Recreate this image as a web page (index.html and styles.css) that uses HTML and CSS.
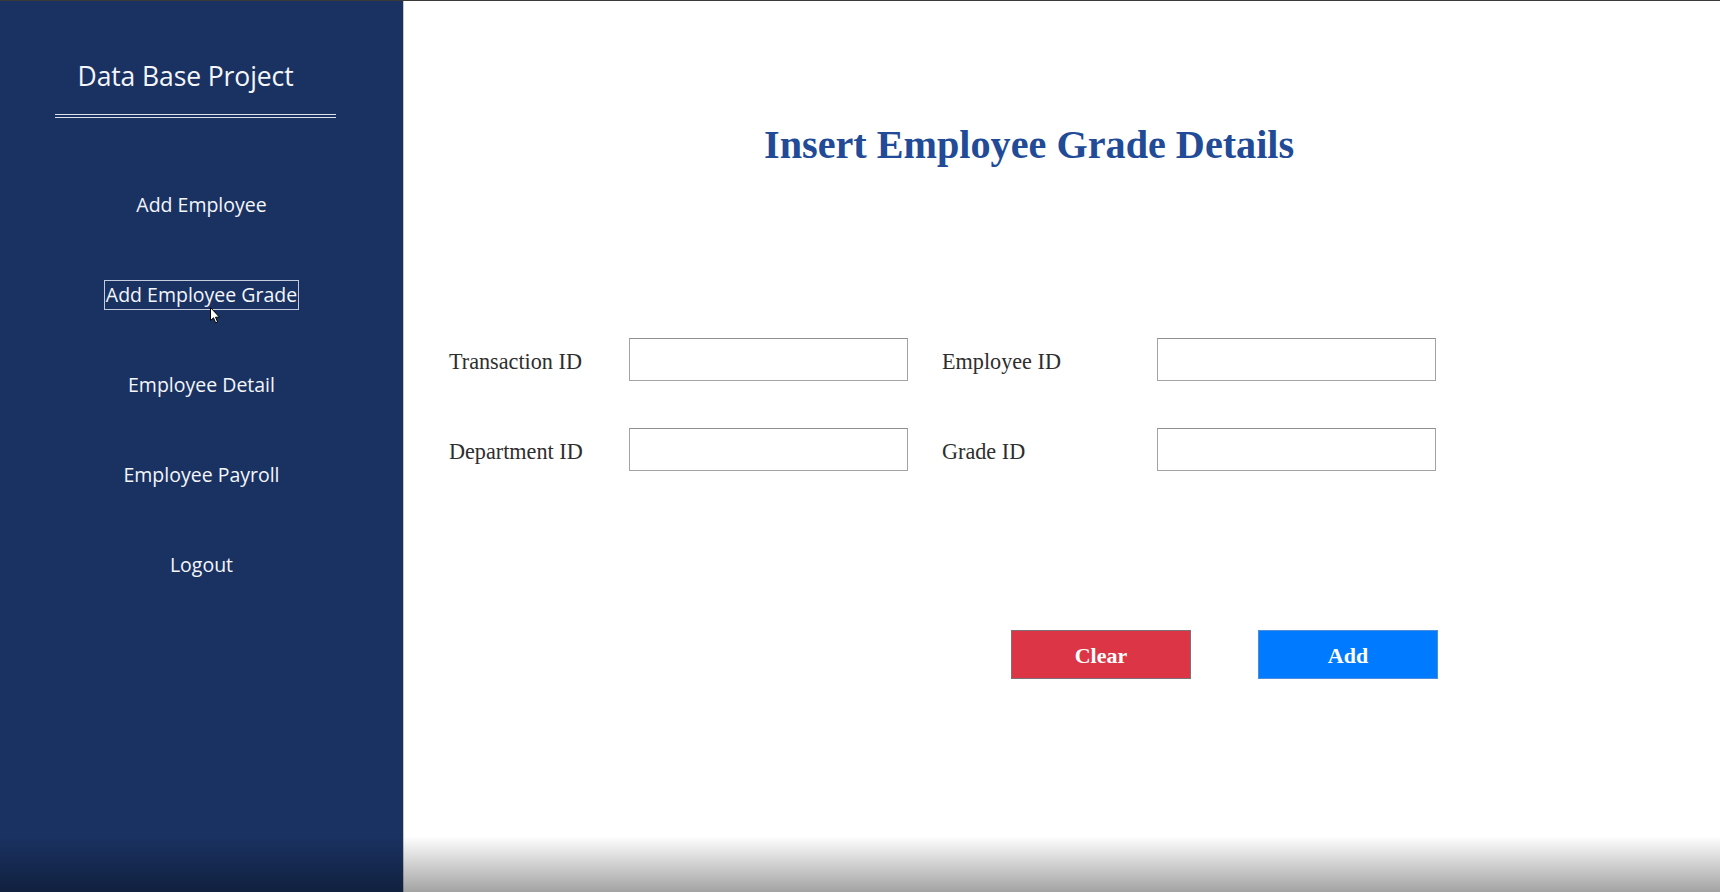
FILE: index.html
```html
<!DOCTYPE html>
<html lang="en">
<head>
<meta charset="utf-8">
<title>Insert Employee Grade Details</title>
<link rel="stylesheet" href="styles.css">
</head>
<body>
<div class="app">
  <aside class="sidebar">
    <div class="brand">
      <div class="brand-title">Data Base Project</div>
      <div class="brand-rule"></div>
    </div>
    <nav class="menu">
      <a class="menu-item">Add Employee</a>
      <a class="menu-item"><span class="active">Add Employee Grade<svg class="cursor" width="11" height="17" viewBox="0 0 11 17"><path d="M0.5 0.5 L0.5 13.5 L3.5 10.8 L5.6 15.8 L7.6 15 L5.5 10.2 L9.5 10.2 Z" fill="#fff" stroke="#000" stroke-width="1"/></svg></span></a>
      <a class="menu-item">Employee Detail</a>
      <a class="menu-item">Employee Payroll</a>
      <a class="menu-item">Logout</a>
    </nav>
  </aside>
  <main class="content">
    <h1 class="page-title">Insert Employee Grade Details</h1>
    <form class="grade-form">
      <label class="field-label">Transaction ID</label>
      <input class="field-input" type="text">
      <label class="field-label second">Employee ID</label>
      <input class="field-input" type="text">
      <label class="field-label">Department ID</label>
      <input class="field-input" type="text">
      <label class="field-label second">Grade ID</label>
      <input class="field-input" type="text">
    </form>
    <div class="actions">
      <button class="btn btn-clear" type="button">Clear</button>
      <button class="btn btn-add" type="button">Add</button>
    </div>
  </main>
</div>
</body>
</html>
```
FILE: styles.css
```css
html, body {
  margin: 0;
  padding: 0;
}
body {
  border-top: 1px solid #3a3a3a;
  background: #ffffff;
  overflow: hidden;
}
.app {
  position: relative;
  display: flex;
  height: 891px;
}
.app::after {
  content: "";
  position: absolute;
  left: 0;
  right: 0;
  bottom: 0;
  height: 56px;
  background: linear-gradient(to bottom, rgba(0,0,0,0), rgba(0,0,0,0.36));
  pointer-events: none;
}
.sidebar {
  width: 404px;
  flex: none;
  background: #1a3262;
  border-right: 1px solid #c8c8c8;
  box-sizing: border-box;
  color: #f4f6fa;
  font-family: "Open Sans", "Noto Sans", sans-serif;
}
.brand {
  margin: 57px 0 0 55px;
  width: 281px;
}
.brand-title {
  font-size: 26.5px;
  font-weight: 400;
  line-height: 36px;
  text-align: center;
  padding-right: 20px;
  letter-spacing: -0.1px;
}
.brand-rule {
  margin-top: 20px;
  height: 2px;
  border-top: 1px solid #dde3ee;
  border-bottom: 1px solid #dde3ee;
}
.menu {
  display: flex;
  flex-direction: column;
  align-items: center;
  gap: 60px;
  margin-top: 72px;
}
.menu-item {
  font-size: 19.5px;
  line-height: 30px;
  color: #f4f6fa;
  text-align: center;
}
.active {
  position: relative;
  display: inline-block;
  line-height: 28px;
  border: 1px solid #c3cbdc;
  padding: 0 1px;
}
.cursor {
  position: absolute;
  left: 105px;
  top: 26px;
}
.content {
  flex: 1;
  padding-left: 45px;
  font-family: "Liberation Serif", "Times New Roman", serif;
}
.page-title {
  margin: 120px 0 0 315px;
  font-size: 40.2px;
  line-height: 48px;
  font-weight: 700;
  color: #214a97;
}
.grade-form {
  display: grid;
  grid-template-columns: 180px 279px 249px 279px;
  grid-auto-rows: 43px;
  row-gap: 47px;
  margin-top: 169px;
  align-items: center;
}
.field-label {
  font-size: 22.2px;
  color: #2e2e2e;
  padding-top: 4px;
}
.field-label.second {
  padding-left: 34px;
}
.field-input {
  box-sizing: border-box;
  height: 43px;
  width: 279px;
  margin: 0;
  border: 1px solid #a3a3a3;
  border-top-color: #8f8f8f;
  background: #ffffff;
  padding: 0 8px;
}
.actions {
  display: flex;
  gap: 67px;
  margin: 159px 0 0 562px;
}
.btn {
  box-sizing: border-box;
  width: 180px;
  height: 49px;
  margin: 0;
  padding-top: 3px;
  font-family: "Liberation Serif", "Times New Roman", serif;
  font-size: 22px;
  font-weight: 700;
  color: #ffffff;
  cursor: pointer;
}
.btn-clear {
  background: #dc3545;
  border: 1px solid #7d7078;
}
.btn-add {
  background: #007bff;
  border: 1px solid #4a8fd8;
}
```
